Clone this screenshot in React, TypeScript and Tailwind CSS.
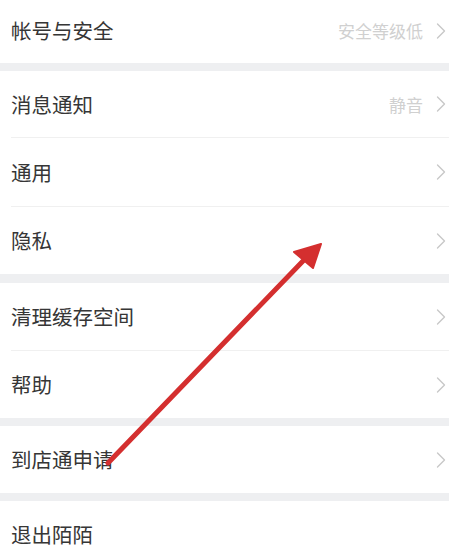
import React from "react";

const Chevron = () => (
  <svg width="10" height="16" viewBox="0 0 10 16" className="shrink-0">
    <path d="M1.5 1 L8.5 8 L1.5 15" fill="none" stroke="#c8c8c8" strokeWidth="1.4" strokeLinecap="round" strokeLinejoin="round" />
  </svg>
);

type RowProps = { label: string; value?: string; chevron?: boolean; h?: string; divider?: boolean };

const Row = ({ label, value, chevron = true, h = "h-[67px]", divider = false }: RowProps) => (
  <div className="relative bg-white">
    <div className={`${h} flex items-center pl-[11px] pr-[3px]`}>
      <span className="flex-1 text-[20.5px] text-[#363636] leading-none">{label}</span>
      {value && <span className="text-[17px] text-[#d0d0d0] leading-none mr-[13px]">{value}</span>}
      {chevron && <Chevron />}
    </div>
    {divider && <div className="ml-[11px] h-px bg-[#f0f0f0]" />}
  </div>
);

const Band = ({ h }: { h: string }) => <div className={`${h} bg-[#eeeff1]`} />;

export default function App() {
  return (
    <div
      className="relative w-full h-[550px] overflow-hidden bg-white"
      style={{ fontFamily: '"Noto Sans CJK SC", "Noto Sans", sans-serif' }}
    >
      <Row label="帐号与安全" value="安全等级低" h="h-[63px] pb-[2px]" />
      <Band h="h-[8px]" />
      <Row label="消息通知" value="静音" h="h-[66px]" divider />
      <Row label="通用" h="h-[68px]" divider />
      <Row label="隐私" h="h-[67px]" />
      <Band h="h-[9px]" />
      <Row label="清理缓存空间" divider />
      <Row label="帮助" />
      <Band h="h-[8px]" />
      <Row label="到店通申请" />
      <Band h="h-[8px]" />
      <Row label="退出陌陌" chevron={false} />

      <svg className="absolute inset-0 pointer-events-none" width="449" height="550" viewBox="0 0 449 550">
        <line x1="108" y1="463" x2="303" y2="261" stroke="#d42f2f" strokeWidth="5" strokeLinecap="round" />
        <polygon points="321,244 294,252 313,268" fill="#d42f2f" stroke="#d42f2f" strokeWidth="2" strokeLinejoin="round" />
      </svg>
    </div>
  );
}
